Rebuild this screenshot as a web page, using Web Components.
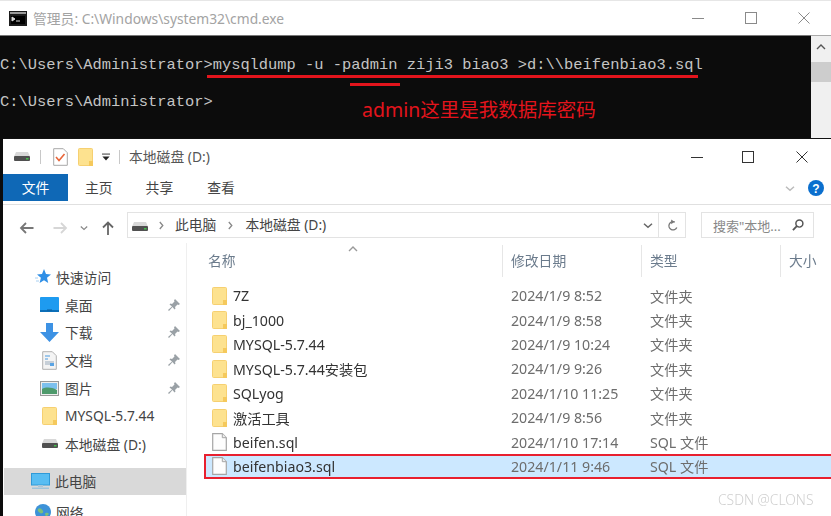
<!DOCTYPE html>
<html lang="zh">
<head>
<meta charset="utf-8">
<title>cmd + explorer</title>
<style>
  html, body { margin: 0; height: 100%; background: #fff; overflow: hidden; }
  body { font: 14px "Noto Sans", "Noto Sans CJK SC", sans-serif; color: #333; }
</style>
</head>
<body>
<x-screen>
  <x-cmd-window></x-cmd-window>
  <x-explorer>
    <x-explorer-title slot="title"></x-explorer-title>
    <x-ribbon slot="ribbon"></x-ribbon>
    <x-address-bar slot="address"></x-address-bar>
    <x-nav-pane slot="nav">
      <x-nav-item icon="star" indent="31" gap="5">快速访问</x-nav-item>
      <x-nav-item icon="desktop" indent="36" wide pin>桌面</x-nav-item>
      <x-nav-item icon="download" indent="36" wide pin>下载</x-nav-item>
      <x-nav-item icon="docs" indent="36" wide pin>文档</x-nav-item>
      <x-nav-item icon="pics" indent="36" wide pin>图片</x-nav-item>
      <x-nav-item icon="folder" indent="36" wide>MYSQL-5.7.44</x-nav-item>
      <x-nav-item icon="drive" indent="36" wide>本地磁盘 (D:)</x-nav-item>
      <x-nav-item icon="pc" indent="27" gap="5" selected style="margin-top:10px">此电脑</x-nav-item>
      <x-nav-item icon="globe" indent="31" gap="5" style="margin-top:3px">网络</x-nav-item>
    </x-nav-pane>
    <x-file-list slot="files">
      <x-file-row icon="folder" date="2024/1/9 8:52" type="文件夹">7Z</x-file-row>
      <x-file-row icon="folder" date="2024/1/9 8:58" type="文件夹">bj_1000</x-file-row>
      <x-file-row icon="folder" date="2024/1/9 10:24" type="文件夹">MYSQL-5.7.44</x-file-row>
      <x-file-row icon="folder" date="2024/1/9 9:26" type="文件夹">MYSQL-5.7.44安装包</x-file-row>
      <x-file-row icon="folder" date="2024/1/10 11:25" type="文件夹">SQLyog</x-file-row>
      <x-file-row icon="folder" date="2024/1/9 8:56" type="文件夹">激活工具</x-file-row>
      <x-file-row icon="file" date="2024/1/10 17:14" type="SQL 文件">beifen.sql</x-file-row>
      <x-file-row icon="file" date="2024/1/11 9:46" type="SQL 文件" selected>beifenbiao3.sql</x-file-row>
    </x-file-list>
  </x-explorer>
</x-screen>

<script>
const ICONS = {
  console: '<svg viewBox="0 0 18 15"><rect width="18" height="15" fill="#1c1c1c"/><rect x="1" y="1" width="16" height="2" fill="#9a9a9a"/><rect x="2" y="5" width="14" height="8" fill="#000"/><path d="M3 6l3 2-3 2zM7 10h4" stroke="#ddd" fill="#ddd"/></svg>',
  folder: '<svg viewBox="0 0 15 18"><rect x=".5" y=".5" width="14" height="17" rx="1" fill="#fde28f" stroke="#f6d071"/><path d="M11 18v-5h4v5z" fill="#f5c95c"/></svg>',
  file: '<svg viewBox="0 0 15 18"><path d="M.7.7h9.6l4 4v12.6H.7z" fill="#fdfdfd" stroke="#a6a6a6" stroke-width="1.2"/><path d="M10.3.7v4h4" fill="#eee" stroke="#a6a6a6"/></svg>',
  drive: '<svg viewBox="0 0 16 9"><path d="M2 0h12l2 4.500H0z" fill="#d8d8d8"/><rect y="4" width="16" height="5" rx="1" fill="#505050"/><rect x="12" y="6" width="2.500" height="1.500" fill="#43c04a"/></svg>',
  check: '<svg viewBox="0 0 15 18"><path d="M.7.7h9.600l4 4v12.600H.7z" fill="#fff" stroke="#a8a8a8"/><path d="M3 9l3 3.500L11.500 6" fill="none" stroke="#e8663a" stroke-width="1.600"/></svg>',
  star: '<svg viewBox="0 0 16 15"><path d="M9 0l2 5 5 .4-4 3.400 1.200 5.200L9 11.200 4.600 14l1.300-5.200L2 5.400 7 5z" fill="#2f8fe6"/><path d="M0 9h3M1 12h3" stroke="#a8d0f2"/></svg>',
  desktop: '<svg viewBox="0 0 19 15"><rect width="19" height="15" rx="1" fill="#1e9bf0"/><rect x="0" y="13" width="19" height="2" fill="#0c6fb8"/><rect x="7" y="12.500" width="5" height="1" fill="#0b5d99"/></svg>',
  download: '<svg viewBox="0 0 19 19"><path d="M6 0h7v9h6l-9.500 10L0 9h6z" fill="#3d92e4"/></svg>',
  docs: '<svg viewBox="0 0 15 19"><path d="M.7.7h9.600l4 4v13.600H.7z" fill="#f4f4f4" stroke="#b0b0b0"/><path d="M3 5h5M3 8h3" stroke="#4a9ae0"/><path d="M3 11h9M3 13h6" stroke="#9ab"/><rect x="8" y="12" width="4" height="3" fill="#5aa4e4"/></svg>',
  pics: '<svg viewBox="0 0 19 15"><rect x=".5" y=".5" width="18" height="14" fill="#eee" stroke="#999"/><rect x="2" y="2" width="15" height="6" fill="#7cc0ee"/><path d="M2 8c4-2 9-2 15 1v4H2z" fill="#4e9a6c"/></svg>',
  pc: '<svg viewBox="0 0 19 16"><rect x=".5" y=".5" width="18" height="11.500" fill="#58bdf2" stroke="#2f9ad8"/><rect x="7" y="12" width="5" height="2" fill="#a9c6d8"/><rect x="1" y="14.500" width="17" height="1.500" fill="#9fc4da"/></svg>',
  globe: '<svg viewBox="0 0 16 16"><circle cx="8" cy="8" r="8" fill="#3d92d8"/><path d="M3 5c2-2 4 0 5 2s-2 3-3 2-3-2-2-4zM10 10c1-2 3-1 4 0l-3 3z" fill="#7cc07a"/></svg>',
  pin: '<svg viewBox="0 0 12 12"><path d="M7 0l5 5-1.500 1-1-.500L7 8l.500 1.500L6.500 10.500 4.500 8 1 12 0 11l4-3.500L1.500 5.500 2.500 4.500 4 5l2.500-2.500L6 1.500z" fill="#9aa1a6"/></svg>',
  min: '<svg viewBox="0 0 12 12"><path d="M0 6.500h12" stroke="currentColor"/></svg>',
  max: '<svg viewBox="0 0 12 12"><rect x=".5" y=".5" width="11" height="11" fill="none" stroke="currentColor"/></svg>',
  close: '<svg viewBox="0 0 12 12"><path d="M.5.500l11 11M11.500.500l-11 11" stroke="currentColor" fill="none"/></svg>',
  caretDown: '<svg viewBox="0 0 10 5"><path d="M1 .700l4 3.500 4-3.500" fill="none" stroke="currentColor" stroke-width="1.500"/></svg>',
  caretRight: '<svg viewBox="0 0 5 9"><path d="M.8 1l3 3.500-3 3.500" fill="none" stroke="currentColor" stroke-width="1.300"/></svg>',
  caretUp: '<svg viewBox="0 0 10 6"><path d="M1 5l4-4 4 4" fill="none" stroke="currentColor" stroke-width="1.400"/></svg>',
  arrowLeft: '<svg viewBox="0 0 14 12"><path d="M14 6H2M6.500 1L1.500 6l5 5" fill="none" stroke="currentColor" stroke-width="1.800"/></svg>',
  arrowRight: '<svg viewBox="0 0 14 12"><path d="M0 6h12M7.500 1l5 5-5 5" fill="none" stroke="currentColor" stroke-width="1.800"/></svg>',
  arrowUp: '<svg viewBox="0 0 12 14"><path d="M6 14V2M1 6.500l5-5 5 5" fill="none" stroke="currentColor" stroke-width="1.800"/></svg>',
  refresh: '<svg viewBox="0 0 12 13"><path d="M5.500 2.500a4.500 4.500 0 1 0 4.500 4.500" fill="none" stroke="currentColor" stroke-width="1.500" transform="rotate(25 6 7)"/><path d="M3.500 0v5l3.500-2.500z" fill="currentColor"/></svg>',
  search: '<svg viewBox="0 0 13 13"><circle cx="8" cy="5" r="3.800" fill="none" stroke="currentColor" stroke-width="1.600"/><path d="M5.200 7.800L1 12" stroke="currentColor" stroke-width="2"/></svg>',
  dropLine: '<svg viewBox="0 0 9 8"><path d="M0 .700h9" stroke="currentColor"/><path d="M.5 3.500h8L4.500 8z" fill="currentColor"/></svg>',
  help: '<svg viewBox="0 0 16 16"><circle cx="8" cy="8" r="8" fill="#0b6fce"/><text x="8" y="12.500" text-anchor="middle" font-size="12" font-weight="700" font-family="Liberation Sans" fill="#fff">?</text></svg>'
}

const define = (name, render, styles = '') => {
  customElements.define(name, class extends HTMLElement {
    constructor() {
      super()
      this.attachShadow({ mode: 'open' })
    }

    connectedCallback() {
      this.shadowRoot.innerHTML = `<style>${styles}</style>${render(this)}`
    }
  })
}

define('x-icon', el => ICONS[el.getAttribute('name')], `
  :host { display: inline-flex; flex: none; width: var(--w, 16px); height: var(--h, 16px); }
  svg { width: 100%; height: 100%; display: block; overflow: visible; }
`)

const icon = (name, w, h, extra = '') =>
  `<x-icon name="${name}" style="--w:${w}px;--h:${h}px;${extra}"></x-icon>`

define('x-screen', () => '<slot></slot>', `
  :host { display: flex; flex-direction: column; width: 831px; height: 516px; overflow: hidden; position: relative; filter: blur(.5px); }
`)

define('x-window-controls', () => `
  ${icon('min', 12, 12, 'margin-right:var(--gap-a)')}${icon('max', 12, 12, 'margin-right:var(--gap-b)')}${icon('close', 12, 12)}
`, `
  :host { display: flex; align-items: center; color: var(--ctl, #8a8a8a); }
`)

define('x-cmd-window', () => `
  <div class="title">
    ${icon('console', 18, 15)}
    <span class="caption">管理员: C:\\Windows\\system32\\cmd.exe</span>
    <x-window-controls></x-window-controls>
  </div>
  <div class="body">
    <div class="term">
      <div class="line">C:\\Users\\Administrator&gt;mysqldump -u -padmin ziji3 biao3 &gt;d:\\\\beifenbiao3.sql</div>
      <div class="line">C:\\Users\\Administrator&gt;</div>
      <i class="mark long"></i>
      <i class="mark short"></i>
      <span class="note">admin这里是我数据库密码</span>
    </div>
    <div class="scroll">
      <span class="up">${icon('caretUp', 10, 6)}</span>
      <span class="thumb"></span>
    </div>
  </div>
`, `
  :host { display: flex; flex-direction: column; flex: none; height: 138px; border-top: 1px solid #e6e6e6; box-sizing: border-box; }
  .title { height: 34px; display: flex; align-items: center; padding: 0 21px 0 9px; background: #fff; --gap-a: 41px; --gap-b: 41px; }
  .caption { margin-left: 6px; flex: 1; font-size: 13.800px; color: #a3a3a3; }
  .body { flex: 1; display: flex; min-height: 0; }
  .term { flex: 1; background: #0c0c0c; border-top: 1px solid #777; position: relative; padding-top: 11.250px; }
  .line { font: 15.420px/37px "Liberation Mono", monospace; color: #c4c4c4; white-space: pre; }
  .mark { position: absolute; background: #e3141c; height: 2.500px; }
  .long { left: 207px; width: 491px; top: 39px; }
  .short { left: 350px; width: 50px; top: 47px; }
  .note { position: absolute; left: 362px; top: 59px; font-size: 19.500px; line-height: 30px; color: #e3141c; white-space: nowrap; }
  .scroll { width: 20px; background: #f0f0f0; border-top: 1px solid #aaa; position: relative; display: flex; flex-direction: column; align-items: center; color: #555; }
  .up { margin-top: 8px; display: flex; }
  .thumb { width: 100%; height: 20px; background: #cdcdcd; margin-top: 12px; }
`)

define('x-explorer', () => `
  <slot name="title"></slot>
  <slot name="ribbon"></slot>
  <slot name="address"></slot>
  <div class="main">
    <slot name="nav"></slot>
    <slot name="files"></slot>
    <span class="mark">CSDN @CLONS</span>
  </div>
`, `
  :host { display: flex; flex-direction: column; flex: 1; min-height: 0; border-left: 3px solid #0c0c0c; background: #fff; }
  .main { flex: 1; display: flex; min-height: 0; position: relative; }
  .mark { position: absolute; left: 715px; top: 247px; font-size: 13.800px; font-weight: 300; color: #d0d0d0; white-space: nowrap; }
`)

define('x-explorer-title', () => `
  ${icon('drive', 16, 9)}
  <i class="sep" style="margin:0 12px 0 10px"></i>
  ${icon('check', 15, 18)}
  ${icon('folder', 15, 18, 'margin-left:10px')}
  ${icon('dropLine', 8, 8, 'margin-left:9px;color:#222')}
  <i class="sep" style="margin:0 9px 0 9px"></i>
  <span class="caption">本地磁盘 (D:)</span>
  <x-window-controls></x-window-controls>
`, `
  :host { display: flex; align-items: center; height: 36px; padding: 0 23px 0 11px; border-top: 1px solid #111; box-sizing: border-box; --gap-a: 39px; --gap-b: 42px; --ctl: #333; }
  .sep { width: 1px; height: 14px; background: #c8c8c8; }
  .caption { flex: 1; font-size: 13.800px; color: #555; margin-bottom: 2px; }
`)

define('x-ribbon', () => `
  <span class="tab file">文件</span>
  <span class="tab" style="margin-left:17px">主页</span>
  <span class="tab" style="margin-left:33px">共享</span>
  <span class="tab" style="margin-left:34px">查看</span>
  <span class="end">
    ${icon('caretDown', 10, 5, 'color:#bbb')}
    ${icon('help', 16, 16)}
  </span>
`, `
  :host { display: flex; align-items: flex-start; height: 31px; border-bottom: 1px solid #e0e0e0; box-sizing: border-box; }
  .tab { font-size: 13.800px; line-height: 27px; color: #444; }
  .file { width: 65px; text-align: center; background: #0f68b6; color: #fff; }
  .end { margin-left: auto; display: flex; align-items: center; gap: 13px; padding: 6px 7px 0 0; }
`)

define('x-address-bar', () => `
  <span class="nav">
    ${icon('arrowLeft', 15, 12, 'color:#777')}
    ${icon('arrowRight', 15, 12, 'color:#d6d6d6;margin-left:19px')}
    ${icon('caretDown', 8, 4, 'color:#888;margin-left:12px')}
    ${icon('arrowUp', 12, 14, 'color:#666;margin-left:14px')}
  </span>
  <div class="box path">
    ${icon('drive', 16, 9, 'margin-top:2px')}
    ${icon('caretRight', 5, 9, 'color:#888;margin-left:11px')}
    <span class="crumb" style="margin-left:11px">此电脑</span>
    ${icon('caretRight', 5, 9, 'color:#888;margin-left:12px')}
    <span class="crumb" style="margin-left:12px">本地磁盘 (D:)</span>
    <span class="tools">
      ${icon('caretDown', 10, 5, 'color:#666')}
      <i class="sep"></i>
      ${icon('refresh', 11, 13, 'color:#777')}
    </span>
  </div>
  <div class="box search">
    <span class="hint">搜索"本地...</span>
    ${icon('search', 12, 12, 'color:#555')}
  </div>
`, `
  :host { display: flex; align-items: flex-start; height: 38px; padding-top: 7px; box-sizing: border-box; font-size: 13.800px; color: #444; }
  .nav { width: 124px; padding: 6px 0 0 16px; box-sizing: border-box; display: flex; align-items: center; height: 26px; }
  .box { height: 26px; box-sizing: border-box; border: 1px solid #e3e3e3; display: flex; align-items: center; }
  .path { width: 559px; padding-left: 4px; }
  .crumb { margin-bottom: 3px; }
  .tools { margin-left: auto; height: 100%; display: flex; align-items: center; gap: 5px; padding-right: 6px; }
  .sep { width: 1px; height: 100%; background: #e3e3e3; margin-right: 4px; }
  .search { width: 113px; margin-left: 15px; padding: 0 9px 0 11px; justify-content: space-between; }
  .hint { color: #888; font-size: 13px; white-space: nowrap; }
`)

define('x-nav-pane', () => '<slot></slot>', `
  :host { display: block; flex: none; width: 184px; padding-top: 20px; box-sizing: border-box; border-right: 1px solid #efefef; overflow: hidden; }
`)

const NAV_SIZES = { star: [16, 15], desktop: [19, 15], download: [19, 19], docs: [15, 19], pics: [19, 15], folder: [15, 18], drive: [16, 9], pc: [19, 16], globe: [16, 16] }

define('x-nav-item', el => {
  const name = el.getAttribute('icon')
  const [w, h] = NAV_SIZES[name]
  const indent = el.getAttribute('indent')
  const gap = el.getAttribute('gap') || 6
  const boxW = el.hasAttribute('wide') ? 19 : w
  return `
    <span class="ic" style="margin-left:${indent}px;width:${boxW}px">${icon(name, w, h)}</span>
    <span class="label" style="margin-left:${gap}px"><slot></slot></span>
    ${el.hasAttribute('pin') ? icon('pin', 12, 12, 'margin-left:auto;margin-right:6px') : ''}
  `
}, `
  :host { display: flex; align-items: center; height: 27.800px; font-size: 13.800px; color: #444; margin-left: 1px; }
  :host([selected]) { background: #d9d9d9; }
  .ic { display: inline-flex; justify-content: center; flex: none; }
  .label { white-space: nowrap; }
`)

define('x-file-list', () => `
  <div class="head">
    <span class="col" style="width:316px;padding-left:21px">名称</span>
    <span class="col" style="width:139px">修改日期</span>
    <span class="col" style="width:139px">类型</span>
    <span class="col last">大小</span>
    <span class="sort">${icon('caretUp', 10, 6)}</span>
  </div>
  <slot></slot>
`, `
  :host { display: block; flex: 1; min-width: 0; overflow: hidden; }
  .head { display: flex; height: 40.500px; padding-top: 2px; box-sizing: border-box; position: relative; font-size: 13.800px; color: #6b7b8c; }
  .col { box-sizing: border-box; padding-left: 8px; height: 32px; line-height: 32px; border-right: 1px solid #e6e6e6; white-space: nowrap; flex: none; }
  .last { border-right: 0; }
  .sort { position: absolute; left: 161px; top: 3px; color: #999; display: flex; }
`)

define('x-file-row', el => `
  ${icon(el.getAttribute('icon'), 15, 18)}
  <span class="name"><slot></slot></span>
  <span class="meta">${el.getAttribute('date')}</span>
  <span class="meta">${el.getAttribute('type')}</span>
`, `
  :host { display: grid; grid-template-columns: 21px 278px 139px 1fr; align-items: center; height: 24.400px; margin-left: 17px; padding-left: 8px; box-sizing: border-box; font-size: 14.200px; }
  :host([selected]) { background: #cce8ff; outline: 2px solid #e8202f; outline-offset: -2px; margin-right: -4px; }
  .name { color: #333; white-space: nowrap; }
  .meta { color: #6d6d6d; white-space: nowrap; }
`)
</script>
</body>
</html>
